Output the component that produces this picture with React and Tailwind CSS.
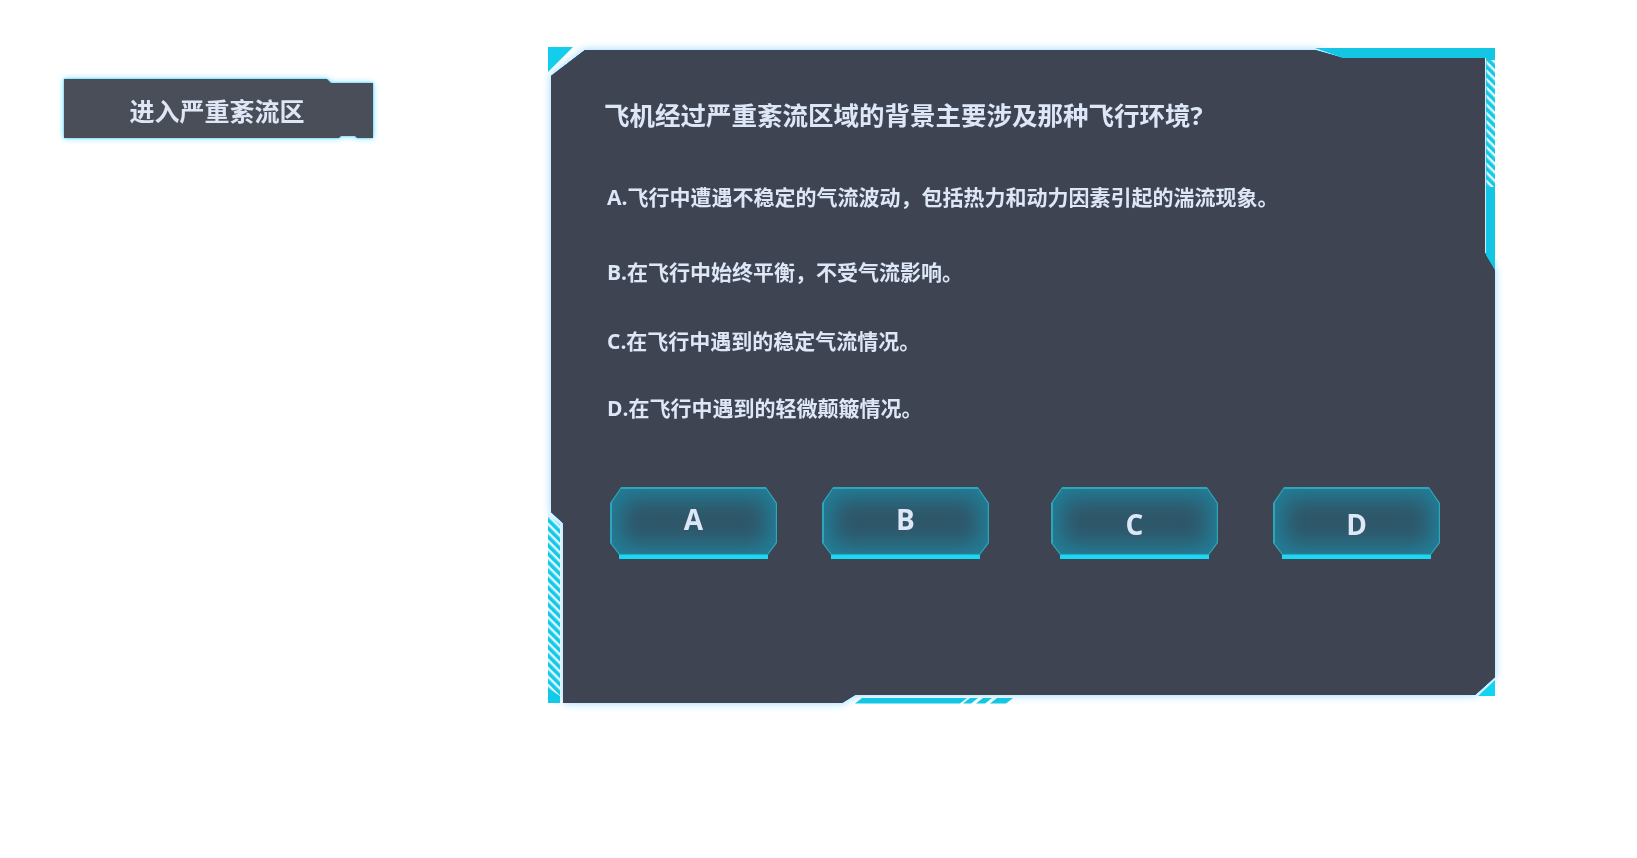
import React from 'react';

const panelClip =
  '[clip-path:polygon(2px_28px,36px_2px,766px_2px,794px_10px,936px_10px,936px_205px,946px_222px,946px_629px,926px_647px,306px_647px,293px_655px,14px_655px,14px_475px,2px_464px)]';

const options = [
  { text: 'A.飞行中遭遇不稳定的气流波动，包括热力和动力因素引起的湍流现象。', mt: 'mt-[52px]' },
  { text: 'B.在飞行中始终平衡，不受气流影响。', mt: 'mt-[47px]' },
  { text: 'C.在飞行中遇到的稳定气流情况。', mt: 'mt-[41px]' },
  { text: 'D.在飞行中遇到的轻微颠簸情况。', mt: 'mt-[39px]' },
];

const AnswerButton = ({ label, className = '', textClass = '' }) => (
  <button type="button" className={`relative w-[167px] h-[72px] flex flex-col ${className}`}>
    <div className="w-full h-[68px] p-[1.5px] bg-[#2ba6bb] [clip-path:polygon(11px_0,156px_0,167px_16px,167px_56px,158px_68px,9px_68px,0_56px,0_16px)]">
      <div
        className={`w-full h-full flex items-center justify-center bg-[#2f5669] shadow-[inset_0_0_22px_9px_#21809a] text-[28px] font-bold text-[#dde7f7] [clip-path:polygon(10px_0,154px_0,164px_15px,164px_54px,156px_65px,8px_65px,0_54px,0_15px)] ${textClass}`}
      >
        {label}
      </div>
    </div>
    <div className="mx-[9px] w-[149px] h-[4px] bg-[#19d9f7]" />
  </button>
);

const FrameDecor = () => (
  <svg
    className="absolute inset-0 w-full h-full overflow-visible pointer-events-none"
    viewBox="0 0 946 657"
  >
    <defs>
      <pattern id="hatch" width="6" height="6" patternUnits="userSpaceOnUse" patternTransform="rotate(-45)">
        <rect width="6" height="6" fill="#e6f8ff" />
        <rect width="3.6" height="6" fill="#12c9e8" />
      </pattern>
    </defs>
    {/* top-left corner */}
    <polygon points="-1,-1 24,-1 -1,24" fill="#12cdec" />
    {/* top-right bar and right strip */}
    <polygon points="766,0 946,0 946,10 794,10" fill="#12c6e4" />
    <polygon points="937,10 946,10 946,222 937,207" fill="#12c6e4" />
    <rect x="937.5" y="12" width="8.5" height="127" fill="url(#hatch)" />
    {/* left strip */}
    <polygon points="-1,466 11,477 11,655 -1,655" fill="url(#hatch)" />
    <polygon points="-1,640 11,648 11,655 -1,655" fill="#12c9e8" />
    {/* bottom right corner */}
    <polygon points="929,648 946,632 946,648" fill="#12d4f2" />
    {/* bottom bar */}
    <polygon points="313,650 418,650 411,655.5 306,655.5" fill="#12c6e4" />
    <polygon points="421,650 429,650 422,655.5 414,655.5" fill="#12c6e4" />
    <polygon points="434,650 443,650 436,655.5 427,655.5" fill="#12c6e4" />
    <polygon points="448,650 464,650 457,655.5 441,655.5" fill="#12c6e4" />
  </svg>
);

export default function App() {
  return (
    <div className="w-full min-h-screen bg-white flex items-start pt-[48px] pl-[64px] [font-family:'Open_Sans','Noto_Sans_CJK_SC',sans-serif]">
      {/* Left action button */}
      <div className="mt-[31px] [filter:drop-shadow(0_0_1px_#37cfff)_drop-shadow(0_0_3px_#8fe4ff)]">
        <button
          type="button"
          className="w-[309px] h-[59px] bg-[#4a4e58] flex items-center justify-center pt-[7px] pr-[3px] text-[25px] font-bold text-[#dfe7f6] [clip-path:polygon(0_0,263px_0,267px_4px,309px_4px,309px_59px,293px_59px,291px_57px,277px_57px,275px_59px,0_59px)]"
        >
          进入严重紊流区
        </button>
      </div>

      {/* Question panel */}
      <div className="relative ml-[176px] w-[946px] h-[657px]">
        <div className="absolute inset-0 [filter:drop-shadow(0_0_0.6px_#1b6fd2)_drop-shadow(0_0_0.6px_#1b6fd2)_drop-shadow(0_0_4px_#8ed8ff)]">
          <div className={`w-full h-full bg-[#3e4451] ${panelClip} pt-[51px] pl-[55px]`}>
            <h2 className="text-[25.5px] leading-[32px] font-bold text-[#dde7f8]">
              飞机经过严重紊流区域的背景主要涉及那种飞行环境?
            </h2>
            <div className="ml-[3px] flex flex-col">
              {options.map((o) => (
                <p key={o.text} className={`${o.mt} text-[21px] leading-[28px] font-bold text-[#dde7f8]`}>
                  {o.text}
                </p>
              ))}
            </div>
            <div className="mt-[65px] ml-[6px] flex items-start">
              <AnswerButton label="A" textClass="pb-[4px]" />
              <AnswerButton label="B" className="ml-[45px]" textClass="pb-[4px]" />
              <AnswerButton label="C" className="ml-[62px]" textClass="pt-[6px]" />
              <AnswerButton label="D" className="ml-[55px]" textClass="pt-[6px]" />
            </div>
          </div>
        </div>
        <FrameDecor />
      </div>
    </div>
  );
}
